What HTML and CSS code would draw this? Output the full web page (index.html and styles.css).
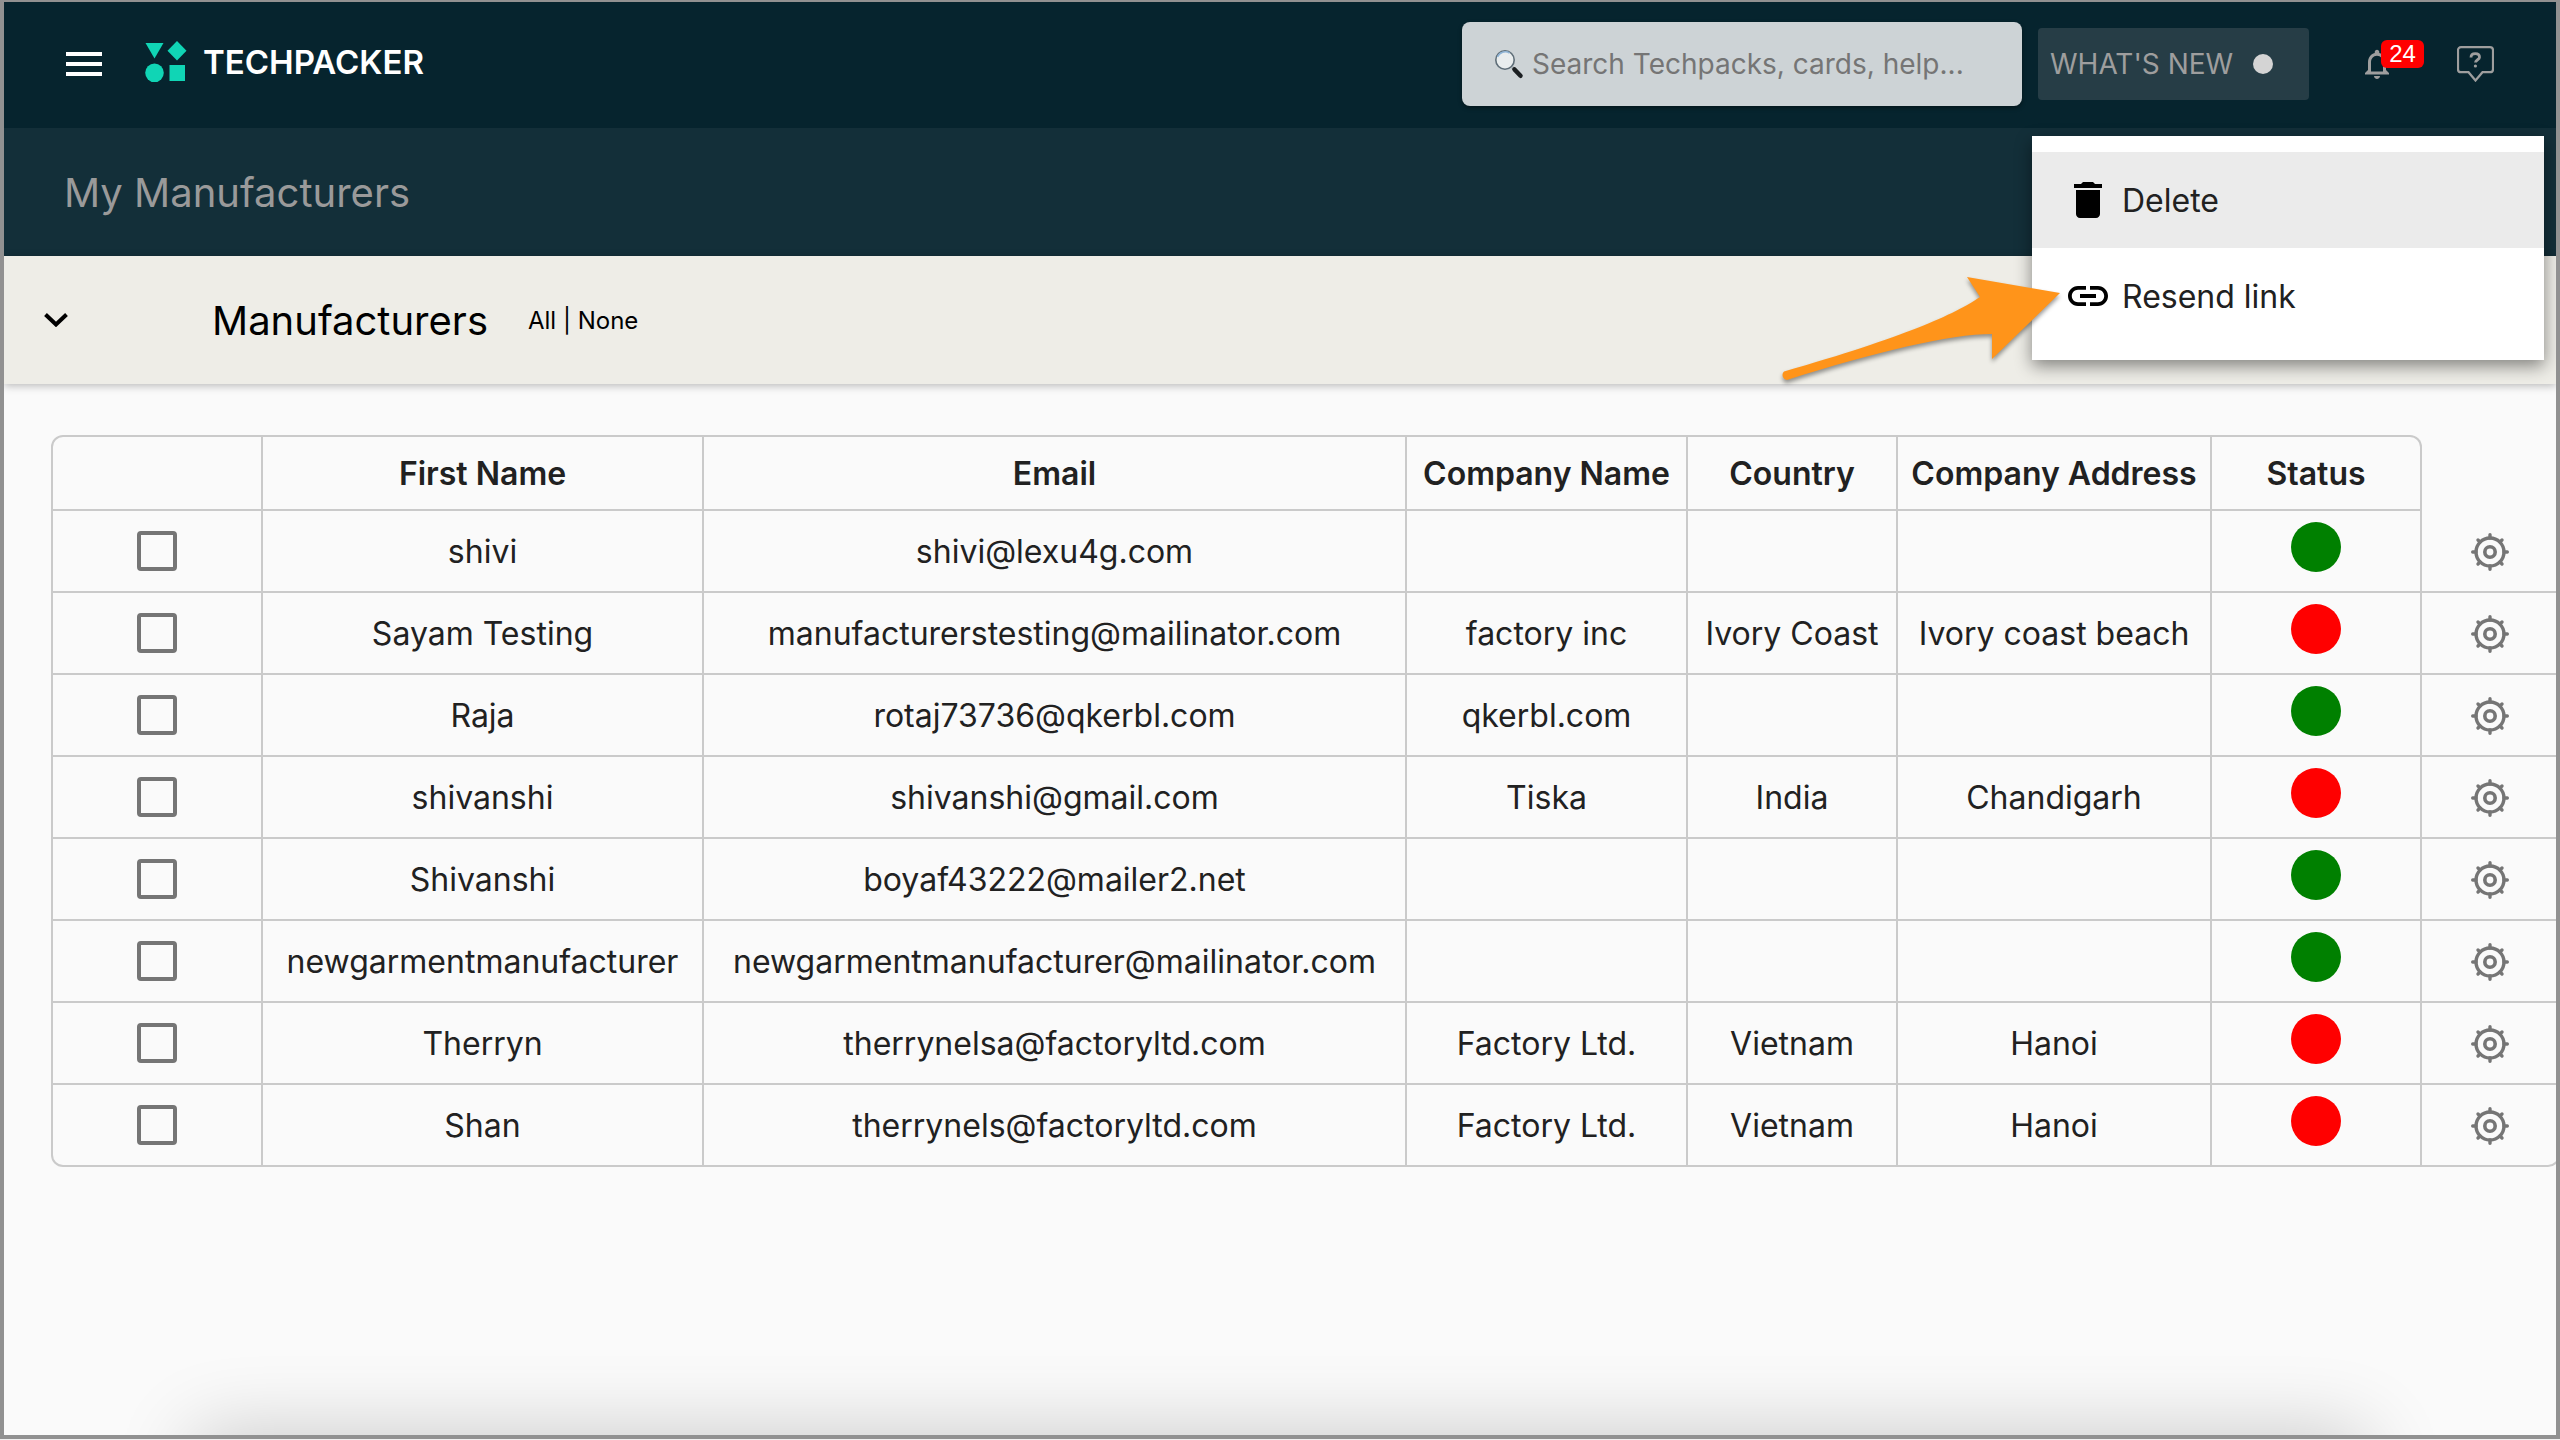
FILE: index.html
```html
<!DOCTYPE html>
<html lang="en">

<head>
    <meta charset="UTF-8" />
    <meta name="viewport" content="width=device-width, initial-scale=1.0" />
    <title>My Manufacturers - Techpacker</title>
    <link rel="stylesheet" href="styles.css">
</head>

<body>
    <!-- Shared icons -->
    <svg class="sprite" aria-hidden="true">
        <symbol id="gear" viewBox="0 0 38 38">
            <g fill="none" stroke="#757575" stroke-linecap="round">
                <circle cx="19" cy="19" r="14" stroke-width="3.4" />
                <circle cx="19" cy="19" r="5.2" stroke-width="3.6" />
                <path stroke-width="3.4" d="M19 5V1.7M19 33v3.3M5 19H1.7M33 19h3.3M9.1 9.1L7 7M28.9 9.1L31 7M9.1 28.9L7 31M28.9 28.9L31 31" />
            </g>
        </symbol>
    </svg>

    <div class="window">
        <header class="topbar">
            <button class="icon-btn menu-btn" aria-label="Open menu">
                <svg width="36" height="24" viewBox="0 0 36 24" fill="#fff">
                    <path d="M0 0h36v4H0zM0 10h36v4H0zM0 20h36v4H0z" />
                </svg>
            </button>
            <a href="#" class="logo">
                <svg width="42" height="42" viewBox="0 0 42 42" fill="#10d5b5">
                    <path d="M.5 2h18L9.5 17.5z" />
                    <path d="M32 0l9.5 9.8L32 19.5 22.5 9.800z" />
                    <circle cx="9.5" cy="31.8" r="9.3" />
                    <path d="M24.500 24H40v16H24.500z" />
                </svg>
                <span>TECHPACKER</span>
            </a>

            <div class="search">
                <svg width="30" height="30" viewBox="0 0 30 30" aria-hidden="true">
                    <path d="M18.5 18.5l3 3" stroke="#8b8f92" stroke-width="3" />
                    <path d="M20.5 20.5l6 6.3" stroke="#1b1f22" stroke-width="4.5" stroke-linecap="round" />
                    <circle cx="11" cy="11" r="9.2" fill="#e9edee" stroke="#5f6e78" stroke-width="1.6" />
                    <path d="M3.5 8a8.3 8.3 0 0 1 12-4" fill="none" stroke="#8fb4d6" stroke-width="1.5" />
                </svg>
                <input type="text" aria-label="Search" placeholder="Search Techpacks, cards, help...">
            </div>

            <button class="whats-new">WHAT'S NEW <span class="dot"></span></button>

            <button class="icon-btn bell" aria-label="Notifications">
                <svg width="36" height="36" viewBox="0 0 24 24" fill="#9e9e9e">
                    <path d="M12 22c1.1 0 2-.9 2-2h-4c0 1.1.9 2 2 2zm6-6v-5c0-3.070-1.630-5.640-4.500-6.320V4c0-.83-.67-1.500-1.500-1.500s-1.500.67-1.500 1.500v.68C7.640 5.360 6 7.920 6 11v5l-2 2v1h16v-1l-2-2zm-2 1H8v-6c0-2.480 1.510-4.500 4-4.500s4 2.020 4 4.500v6z" />
                </svg>
                <span class="badge">24</span>
            </button>

            <button class="icon-btn help" aria-label="Help">
                <svg width="37" height="36" viewBox="0 0 37 36" fill="none" stroke="#9e9e9e" stroke-width="2.2">
                    <path d="M4 1.2h29a3 3 0 0 1 3 3v19a3 3 0 0 1-3 3h-7.500l-7 8.300-7-8.300H4a3 3 0 0 1-3-3v-19a3 3 0 0 1 3-3z" />
                    <path stroke-width="2.8" d="M14 11.5c0-2.600 2-3.800 4.300-3.800s4.200 1.200 4.200 3.500c0 2.500-4 2.600-4 5.300" />
                    <circle cx="18.4" cy="20" r="1.6" fill="#9e9e9e" stroke="none" />
                </svg>
            </button>
        </header>

        <div class="subbar">
            <h1>My Manufacturers</h1>
        </div>

        <div class="section-bar">
            <button class="icon-btn" aria-label="Collapse section">
                <svg width="24" height="14" viewBox="0 0 24 14" fill="none" stroke="#000" stroke-width="4">
                    <path d="M1.5 1.5L12 11.5 22.5 1.5" />
                </svg>
            </button>
            <h2>Manufacturers</h2>
            <div class="pick"><a href="#">All</a> | <a href="#">None</a></div>
        </div>

        <main class="content">
            <table class="makers">
                <colgroup>
                    <col class="col-check">
                    <col class="col-name">
                    <col class="col-email">
                    <col class="col-company">
                    <col class="col-country">
                    <col class="col-address">
                    <col class="col-status">
                    <col class="col-gear">
                </colgroup>
                <thead>
                    <tr>
                        <th></th>
                        <th>First Name</th>
                        <th>Email</th>
                        <th>Company Name</th>
                        <th>Country</th>
                        <th>Company Address</th>
                        <th>Status</th>
                    </tr>
                </thead>
                <tbody>
                    <tr>
                        <td><input type="checkbox" aria-label="Select shivi"></td>
                        <td>shivi</td>
                        <td>shivi@lexu4g.com</td>
                        <td></td>
                        <td></td>
                        <td></td>
                        <td><span class="status active"></span></td>
                        <td><button class="icon-btn" aria-label="Settings"><svg width="38" height="38"><use href="#gear" /></svg></button></td>
                    </tr>
                    <tr>
                        <td><input type="checkbox" aria-label="Select Sayam Testing"></td>
                        <td>Sayam Testing</td>
                        <td>manufacturerstesting@mailinator.com</td>
                        <td>factory inc</td>
                        <td>Ivory Coast</td>
                        <td>Ivory coast beach</td>
                        <td><span class="status"></span></td>
                        <td><button class="icon-btn" aria-label="Settings"><svg width="38" height="38"><use href="#gear" /></svg></button></td>
                    </tr>
                    <tr>
                        <td><input type="checkbox" aria-label="Select Raja"></td>
                        <td>Raja</td>
                        <td>rotaj73736@qkerbl.com</td>
                        <td>qkerbl.com</td>
                        <td></td>
                        <td></td>
                        <td><span class="status active"></span></td>
                        <td><button class="icon-btn" aria-label="Settings"><svg width="38" height="38"><use href="#gear" /></svg></button></td>
                    </tr>
                    <tr>
                        <td><input type="checkbox" aria-label="Select shivanshi"></td>
                        <td>shivanshi</td>
                        <td>shivanshi@gmail.com</td>
                        <td>Tiska</td>
                        <td>India</td>
                        <td>Chandigarh</td>
                        <td><span class="status"></span></td>
                        <td><button class="icon-btn" aria-label="Settings"><svg width="38" height="38"><use href="#gear" /></svg></button></td>
                    </tr>
                    <tr>
                        <td><input type="checkbox" aria-label="Select Shivanshi"></td>
                        <td>Shivanshi</td>
                        <td>boyaf43222@mailer2.net</td>
                        <td></td>
                        <td></td>
                        <td></td>
                        <td><span class="status active"></span></td>
                        <td><button class="icon-btn" aria-label="Settings"><svg width="38" height="38"><use href="#gear" /></svg></button></td>
                    </tr>
                    <tr>
                        <td><input type="checkbox" aria-label="Select newgarmentmanufacturer"></td>
                        <td>newgarmentmanufacturer</td>
                        <td>newgarmentmanufacturer@mailinator.com</td>
                        <td></td>
                        <td></td>
                        <td></td>
                        <td><span class="status active"></span></td>
                        <td><button class="icon-btn" aria-label="Settings"><svg width="38" height="38"><use href="#gear" /></svg></button></td>
                    </tr>
                    <tr>
                        <td><input type="checkbox" aria-label="Select Therryn"></td>
                        <td>Therryn</td>
                        <td>therrynelsa@factoryltd.com</td>
                        <td>Factory Ltd.</td>
                        <td>Vietnam</td>
                        <td>Hanoi</td>
                        <td><span class="status"></span></td>
                        <td><button class="icon-btn" aria-label="Settings"><svg width="38" height="38"><use href="#gear" /></svg></button></td>
                    </tr>
                    <tr>
                        <td><input type="checkbox" aria-label="Select Shan"></td>
                        <td>Shan</td>
                        <td>therrynels@factoryltd.com</td>
                        <td>Factory Ltd.</td>
                        <td>Vietnam</td>
                        <td>Hanoi</td>
                        <td><span class="status"></span></td>
                        <td><button class="icon-btn" aria-label="Settings"><svg width="38" height="38"><use href="#gear" /></svg></button></td>
                    </tr>
                </tbody>
            </table>
        </main>

        <!-- Row actions menu -->
        <div class="menu">
            <button class="menu-item selected">
                <svg width="48" height="48" viewBox="0 0 24 24">
                    <path d="M6 19c0 1.1.9 2 2 2h8c1.1 0 2-.9 2-2V7H6v12zM19 4h-3.5l-1-1h-5l-1 1H5v2h14V4z" />
                </svg>
                Delete
            </button>
            <button class="menu-item">
                <svg width="48" height="48" viewBox="0 0 24 24">
                    <path d="M3.9 12c0-1.710 1.390-3.100 3.100-3.100h4V7H7c-2.760 0-5 2.240-5 5s2.240 5 5 5h4v-1.900H7c-1.710 0-3.100-1.390-3.100-3.100zM8 13h8v-2H8v2zm9-6h-4v1.900h4c1.710 0 3.100 1.390 3.100 3.100s-1.390 3.100-3.100 3.100h-4V17h4c2.760 0 5-2.240 5-5s-2.240-5-5-5z" />
                </svg>
                Resend link
            </button>
        </div>

        <!-- Pointer to "Resend link" -->
        <svg class="arrow" width="290" height="120" viewBox="0 0 290 120" fill="#ff941a">
            <path d="M280 18L187 2l13 20C175 39 125 62 4 96.500a5 5 0 0 0 3 8.500C95 77 170 59 212 59v25z" />
        </svg>

        <div class="bottom-shade"></div>
    </div>
</body>

</html>
```
FILE: styles.css
```css
* {
    box-sizing: border-box;
}

body {
    margin: 0;
    background: #f0f0f0;
    color: #212121;
    font-family: Inter, "Open Sans", sans-serif;
    font-size: 32px;
}

button,
input {
    font-family: inherit;
    margin: 0;
}

button {
    cursor: pointer;
}

a {
    color: inherit;
    text-decoration: none;
}

svg {
    display: block;
    flex: none;
}

.sprite {
    position: absolute;
    width: 0;
    height: 0;
}

.window {
    position: relative;
    min-height: calc(100vh - 1px);
    border: 4px solid #919191;
    border-top-width: 2px;
    background: #fafafa;
    overflow: hidden;
}

.icon-btn {
    position: relative;
    padding: 0;
    border: none;
    background: none;
}

/* Top bar */
.topbar {
    display: flex;
    align-items: center;
    height: 126px;
    padding: 0 62px 2px;
    background: #06242e;
}

.logo {
    display: flex;
    align-items: center;
    gap: 16px;
    margin: 0 auto 4px 43px;
    color: #fff;
    font-size: 33px;
    font-weight: 600;
}

.search {
    display: flex;
    align-items: center;
    gap: 8px;
    width: 560px;
    height: 84px;
    padding: 0 32px;
    border-radius: 8px;
    background: #cdd3d6;
    box-shadow: 0 2px 4px rgba(0, 0, 0, 0.4);
}

.search input {
    flex: 1;
    min-width: 0;
    padding: 0;
    border: none;
    outline: none;
    background: none;
    font-size: 28px;
}

.search input::placeholder {
    color: #757575;
}

.whats-new {
    display: flex;
    align-items: center;
    gap: 20px;
    width: 271px;
    height: 72px;
    margin-left: 16px;
    padding: 0 12px;
    border: none;
    border-radius: 4px;
    background: #263d46;
    color: #9e9e9e;
    font-size: 28px;
    white-space: nowrap;
}

.dot {
    width: 20px;
    height: 20px;
    border-radius: 50%;
    background: #d4d4d4;
}

.bell {
    margin-left: 50px;
}

.badge {
    position: absolute;
    top: -6px;
    left: 22px;
    width: 43px;
    border-radius: 6px;
    background: #f00;
    color: #fff;
    font-family: "Liberation Sans", Arial, sans-serif;
    font-size: 24px;
    line-height: 28px;
    text-align: center;
}

.help {
    margin-left: 62px;
}

/* Page title */
.subbar {
    display: flex;
    align-items: center;
    height: 128px;
    padding: 0 60px;
    background: #132f39;
}

h1,
h2 {
    margin: 0;
    font-size: 40px;
    font-weight: 400;
}

h1 {
    color: #9a9a9a;
}

.section-bar {
    display: flex;
    align-items: center;
    height: 128px;
    padding: 0 40px;
    background: #eeede7;
    color: #000;
    box-shadow: 0 2px 8px rgba(0, 0, 0, 0.25);
}

.section-bar h2 {
    margin-left: 144px;
}

.pick {
    margin-left: 40px;
    font-size: 24px;
}

/* Table */
.content {
    padding: 51px 0 51px 47px;
    margin-right: -4px;
}

.makers {
    width: 100%;
    table-layout: fixed;
    border-collapse: separate;
    border-spacing: 0;
    text-align: center;
}

.col-check {
    width: 212px;
}

.col-name {
    width: 441px;
}

.col-email {
    width: 703px;
}

.col-company {
    width: 281px;
}

.col-country {
    width: 210px;
}

.col-address {
    width: 314px;
}

.col-status {
    width: 210px;
}

.col-gear {
    width: 138px;
}

.makers th,
.makers td {
    height: 82px;
    padding: 0;
    border: 0 solid #cacaca;
    border-width: 0 2px 2px 0;
    white-space: nowrap;
}

.makers th {
    height: 76px;
    border-top-width: 2px;
    font-weight: 600;
}

.makers th:first-child,
.makers td:first-child {
    border-left-width: 2px;
}

.makers th:first-child {
    border-top-left-radius: 12px;
}

.makers th:last-child {
    border-top-right-radius: 12px;
}

.makers tr:last-child td:first-child {
    border-bottom-left-radius: 12px;
}

.makers tr:last-child td:last-child {
    border-bottom-right-radius: 12px;
}

.makers input {
    appearance: none;
    display: block;
    width: 40px;
    height: 40px;
    margin: 0 auto;
    border: 4px solid #757575;
    border-radius: 4px;
}

.makers .icon-btn {
    display: block;
    margin: 2px auto 0;
}

.status {
    display: block;
    width: 50px;
    height: 50px;
    margin: 0 auto 8px;
    border-radius: 50%;
    background: #f00;
}

.status.active {
    background: #008000;
}

/* Actions menu */
.menu {
    position: absolute;
    top: 134px;
    right: 12px;
    width: 512px;
    padding: 16px 0;
    background: #fff;
    box-shadow: 0 6px 16px rgba(0, 0, 0, 0.45);
}

.menu-item {
    display: flex;
    align-items: center;
    gap: 10px;
    width: 100%;
    height: 96px;
    padding: 0 32px;
    border: none;
    background: none;
    color: #212121;
    font-size: 32px;
}

.menu-item.selected {
    background: #ebebeb;
}

.arrow {
    position: absolute;
    top: 273px;
    right: 486px;
    filter: drop-shadow(0 3px 2px rgba(0, 0, 0, 0.4));
}

.bottom-shade {
    position: absolute;
    top: 100%;
    left: 200px;
    right: 200px;
    height: 80px;
    box-shadow: 0 8px 80px 10px rgba(0, 0, 0, 0.2);
}
```
